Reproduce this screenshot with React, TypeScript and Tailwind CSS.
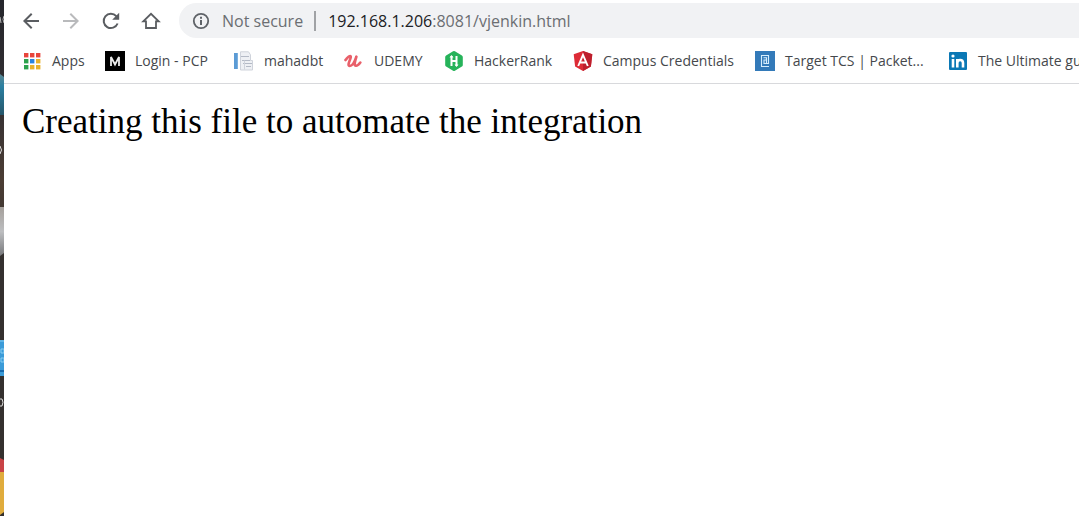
import type { ReactNode } from "react";
import { MdArrowBack, MdArrowForward } from "react-icons/md";

const appColors = ["#e8453c", "#e8453c", "#e8453c", "#2ba24c", "#2a84e0", "#e9b22c", "#2ba24c", "#e9b22c", "#e9b22c"];

function AppsIcon() {
  return (
    <svg viewBox="0 0 20 20" className="size-5">
      {appColors.map((fill, i) => (
        <rect key={i} x={2 + (i % 3) * 6} y={2 + Math.floor(i / 3) * 6} width="4.4" height="4.4" fill={fill} />
      ))}
    </svg>
  );
}

function PcpIcon() {
  return (
    <svg viewBox="0 0 20 20" className="size-5">
      <path fill="#000" d="M0 0h20v20H0z" />
      <path fill="none" stroke="#eee" strokeWidth="1.800" d="M6 15V6l4 7.500L14 6v9" />
    </svg>
  );
}

function DocumentIcon() {
  return (
    <svg viewBox="0 0 20 20" className="size-5">
      <path fill="#5b9bd5" d="M0 2h3.800v16H0z" />
      <path fill="#eef0f4" stroke="#cfd3db" d="M6.500.8h8l2 3v5.700H18.500v9.500H6.500z" />
      <path fill="none" stroke="#b4bac6" strokeWidth="1" d="M7 5.500h8M8 9.500h8M9 12.500h9M12 15.500h5" />
      <path fill="none" stroke="#cfd3db" d="M10.500 9.500v9" />
    </svg>
  );
}

function UdemyIcon() {
  return (
    <svg viewBox="0 0 20 20" className="size-5">
      <path
        fill="none"
        stroke="#e9606a"
        strokeWidth="2.600"
        strokeLinecap="round"
        strokeLinejoin="round"
        d="M1.500 9C3 7.500 4.500 5 5.800 5c1.800-.2.700 2.600-.3 5-1.100 2.700-1.500 5 .2 5 2.600 0 5.400-5.400 6.700-9.300-1.300 3.700-2.700 8.800-.4 9.100 1.600.1 3.200-1.700 4.300-3.200"
      />
    </svg>
  );
}

function HackerRankIcon() {
  return (
    <svg viewBox="0 0 20 20" className="size-5">
      <path fill="#26b35a" d="M9.100.3q.9-.5 1.800 0l7 4.100q.9.500.9 1.500v8.200q0 1-.9 1.500l-7 4.100q-.9.500-1.800 0l-7-4.100q-.9-.5-.9-1.500V5.900q0-1 .9-1.500z" />
      <path fill="none" stroke="#fff" strokeWidth="2" d="M7.500 5v10M12.500 5v10M7.500 10h5" />
      <path fill="#fff" d="M5.500 6.500 7.500 4l2 2.500zM10.500 13.500l2 2.500 2-2.500z" />
    </svg>
  );
}

function AngularIcon() {
  return (
    <svg viewBox="0 0 20 20" className="size-5">
      <path fill="#dd2b36" d="m10 0 9.300 3.300-1.400 12.300L10 20l-7.900-4.400L.7 3.300z" />
      <path fill="#bd1f2d" d="m10 0 9.300 3.300-1.400 12.300L10 20z" />
      <path fill="none" stroke="#fff" strokeWidth="1.900" d="M5.200 15 10 3.800 14.800 15M7 11.500h6" />
    </svg>
  );
}

function TargetIcon() {
  return (
    <svg viewBox="0 0 20 20" className="size-5">
      <path fill="#337ab9" d="M0 0h20v20H0z" />
      <path fill="none" stroke="#d6edfc" strokeWidth="1.100" d="M14 15.500H6.500v-11h7v8h-4.500v-3.500h3M8.500 6.800h3v5.200" />
    </svg>
  );
}

function LinkedInIcon() {
  return (
    <svg viewBox="0 0 20 20" className="size-5">
      <rect x="1" y="1" width="18" height="18" rx="1" fill="#0b78b5" />
      <path fill="none" stroke="#fff" strokeWidth="2.600" d="M5 8v8.500M9.300 8v8.500M9.300 12c0-4 5.700-4 5.700 0v4.500" />
      <circle cx="5" cy="5" r="1.600" fill="#fff" />
    </svg>
  );
}

function ReloadIcon() {
  return (
    <svg viewBox="0 0 24 24" className="size-6">
      <path fill="none" stroke="currentColor" strokeWidth="2" d="M18.600 14.500A7.200 7.200 0 1 1 17.300 7.100l1.600 1.700" />
      <path fill="currentColor" d="M20.200 3.800v7h-7z" />
    </svg>
  );
}

function HomeIcon() {
  return (
    <svg viewBox="0 0 24 24" className="size-6">
      <path fill="none" stroke="currentColor" strokeWidth="1.800" d="M4.300 12.300H7V19h10v-6.700h2.700L12 4.800z" />
    </svg>
  );
}

function InfoIcon() {
  return (
    <svg viewBox="0 0 20 20" className="size-5">
      <circle cx="10" cy="10" r="7.200" fill="none" stroke="#5f6368" strokeWidth="1.800" />
      <path stroke="#5f6368" strokeWidth="2" d="M10 5.800v2M10 9v5" />
    </svg>
  );
}

const bookmarks: { label: string; icon: ReactNode }[] = [
  { label: "Apps", icon: <AppsIcon /> },
  { label: "Login - PCP", icon: <PcpIcon /> },
  { label: "mahadbt", icon: <DocumentIcon /> },
  { label: "UDEMY", icon: <UdemyIcon /> },
  { label: "HackerRank", icon: <HackerRankIcon /> },
  { label: "Campus Credentials", icon: <AngularIcon /> },
  { label: "Target TCS | Packet...", icon: <TargetIcon /> },
  { label: "The Ultimate gu", icon: <LinkedInIcon /> },
];

function NavButton({ label, disabled, children }: { label: string; disabled?: boolean; children: ReactNode }) {
  return (
    <button
      type="button"
      aria-label={label}
      disabled={disabled}
      className="flex h-[35px] w-10 shrink-0 items-center justify-center text-[#5a5d61] disabled:text-[#b9babc]"
    >
      {children}
    </button>
  );
}

function DesktopEdge() {
  return (
    <svg viewBox="0 0 4 516" preserveAspectRatio="xMinYMin slice" className="h-screen w-1 shrink-0" aria-hidden="true">
      <defs>
        <linearGradient id="wall" x2="0" y2="1">
          <stop offset="0" stopColor="#25262c" />
          <stop offset=".2" stopColor="#343033" />
          <stop offset=".35" stopColor="#4b3d34" />
          <stop offset=".5" stopColor="#34302f" />
          <stop offset="1" stopColor="#34302e" />
        </linearGradient>
        <linearGradient id="teal" x2="0" y2="1">
          <stop offset="0" stopColor="#5c8792" />
          <stop offset=".3" stopColor="#2b80a2" />
          <stop offset="1" stopColor="#26566a" />
        </linearGradient>
        <linearGradient id="bin" x2="0" y2="1">
          <stop offset="0" stopColor="#a5a09b" />
          <stop offset=".5" stopColor="#bdbec0" />
          <stop offset="1" stopColor="#77787b" />
        </linearGradient>
      </defs>
      <path fill="url(#wall)" d="M0 0h4v516H0z" />
      <path fill="none" stroke="#bbb" d="M0 17l1 6M4 16q-2 3 0 7" />
      <path fill="url(#teal)" d="M0 74l4 3v38H0z" />
      <path fill="none" stroke="#ddd" d="M0 146q3 4 0 8" />
      <path fill="url(#bin)" d="M0 207h4v46l-4 3z" />
      <path fill="#3b9bd8" d="M0 340h4v36H0z" />
      <path fill="none" stroke="#87cdf2" d="M0 341h4M1 349h3v4H1zM1 358h3v4H1z" />
      <path fill="#1769ac" d="M0 370h4v2H0z" />
      <path fill="none" stroke="#ddd" d="M0 399h2q2 3 0 7H0" />
      <path fill="#c94346" d="M0 458l4 2v12H0z" />
      <path fill="#e0ac3d" d="M0 472h4v40l-4 3z" />
    </svg>
  );
}

export default function App() {
  return (
    <div className="flex min-h-screen overflow-hidden bg-white">
      <DesktopEdge />
      <div className="min-w-0 flex-1">
        <header className="border-b border-[#d8d9dc] pt-[3px] font-['Open_Sans',sans-serif]">
          <div className="flex items-center pl-[7px]">
            <nav aria-label="Navigation" className="flex pr-2">
              <NavButton label="Back"><MdArrowBack className="size-6" /></NavButton>
              <NavButton label="Forward" disabled><MdArrowForward className="size-6" /></NavButton>
              <NavButton label="Reload"><ReloadIcon /></NavButton>
              <NavButton label="Home"><HomeIcon /></NavButton>
            </nav>
            <div className="flex h-[35px] min-w-0 flex-1 items-center rounded-l-full bg-[#f1f2f4] pl-3 text-[16px] whitespace-nowrap text-[#6b6e72]">
              <button type="button" className="flex items-center gap-[11px]">
                <InfoIcon />
                <span>Not secure</span>
              </button>
              <span className="mr-3 ml-[11px] h-5 w-[2px] bg-[#a0a2a5]" />
              <a href="http://192.168.1.206:8081/vjenkin.html">
                <span className="text-[#202124]">192.168.1.206</span>:8081/vjenkin.html
              </a>
            </div>
          </div>
          <nav
            aria-label="Bookmarks"
            className="grid h-[45px] grid-cols-[83px_129px_110px_100px_129px_182px_193px_1fr] items-center overflow-hidden pl-[18px] text-sm whitespace-nowrap text-[#45484c]"
          >
            {bookmarks.map(({ label, icon }) => (
              <a key={label} href="#" className="flex items-center gap-[10px]">
                <span className="shrink-0">{icon}</span>
                <span>{label}</span>
              </a>
            ))}
          </nav>
        </header>
        <main className="px-[18px] pt-[18px]">
          <p className="font-['Liberation_Serif',serif] text-[35px] leading-10 text-black">
            Creating this file to automate the integration
          </p>
        </main>
      </div>
    </div>
  );
}
